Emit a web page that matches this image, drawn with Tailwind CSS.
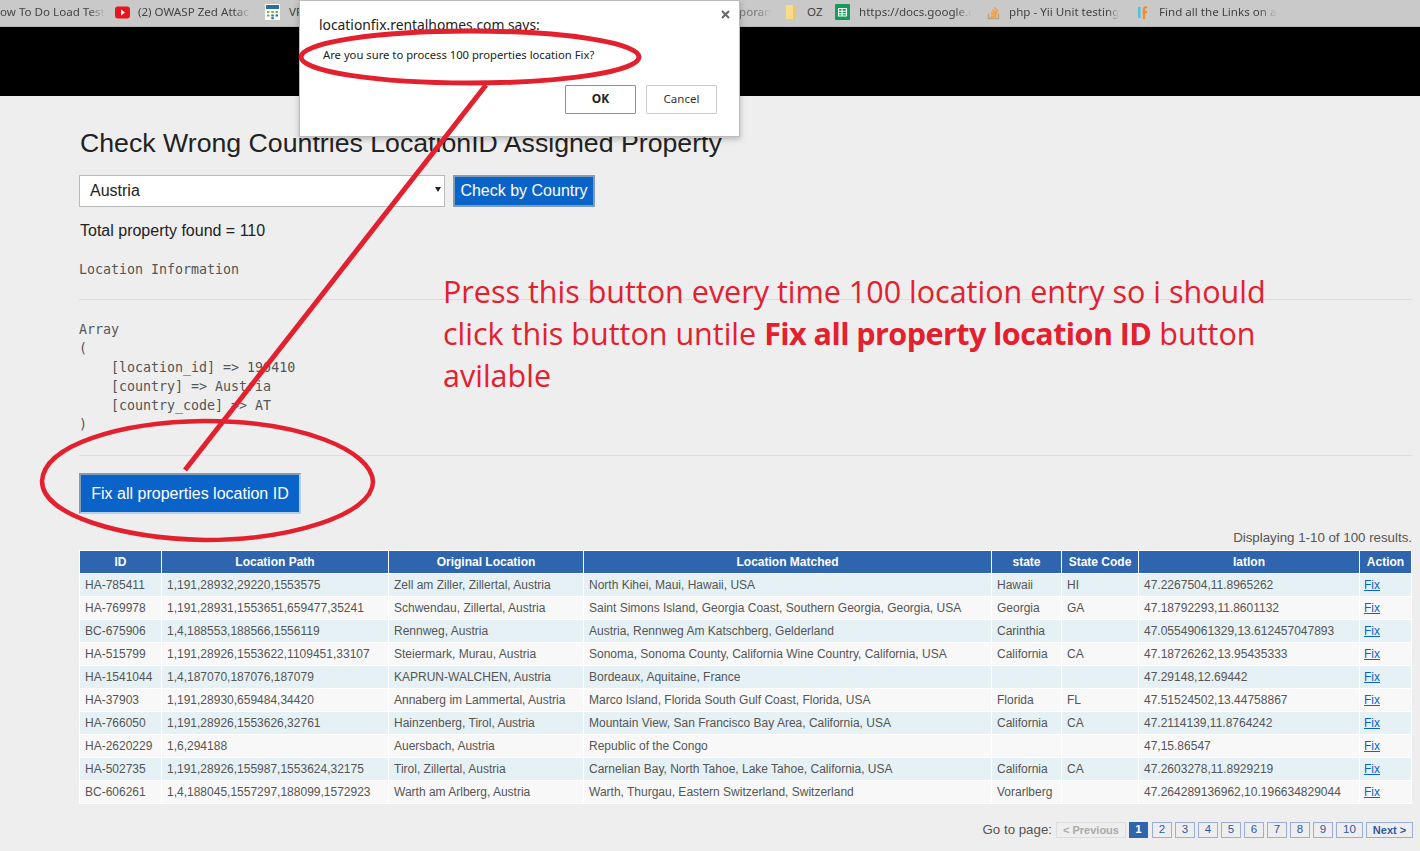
<!DOCTYPE html>
<html lang="en">
<head>
  <meta charset="UTF-8">
  <title>Check Wrong Countries LocationID Assigned Property</title>
  <script src="https://cdn.jsdelivr.net/npm/@tailwindcss/browser@4"></script>
</head>
<body class="relative h-[851px] w-[1420px] overflow-hidden bg-[#eeeeee] font-['Liberation_Sans',sans-serif]">

  <!-- bookmarks bar -->
  <div class="flex h-[27px] items-center overflow-hidden border-b border-[#b5b5b5] bg-[#c9c9c9] pb-[2px] font-['Noto_Sans',sans-serif] text-[11.600px] text-[#444]">
    <span class="w-[105px] shrink-0 whitespace-nowrap [mask-image:linear-gradient(to_right,black_85%,transparent)]">ow To Do Load Test</span>
    <svg class="ml-[10px] shrink-0" width="15" height="13" viewBox="0 0 15 13"><rect width="15" height="12" y="0.5" rx="3" fill="#e8151b"/><path d="M6 3.500l4 3-4 3z" fill="#fff"/></svg>
    <span class="ml-[8px] w-[113px] shrink-0 whitespace-nowrap [mask-image:linear-gradient(to_right,black_85%,transparent)]">(2) OWASP Zed Attac</span>
    <svg class="ml-[14px] shrink-0" width="15" height="16" viewBox="0 0 15 16"><rect width="15" height="16" fill="#fff"/><rect x="1" y="1" width="13" height="4" fill="#2a6f9e"/><g fill="#7cb342"><rect x="2" y="7" width="2.500" height="2"/><rect x="6.300" y="7" width="2.500" height="2"/><rect x="10.500" y="7" width="2.500" height="2"/><rect x="2" y="10.500" width="2.500" height="2"/></g><g fill="#2a6f9e"><rect x="6.300" y="10.500" width="2.500" height="2"/><rect x="10.500" y="10.500" width="2.500" height="2"/><rect x="6.300" y="13.200" width="2.500" height="2"/></g></svg>
    <span class="ml-[9px] w-[20px] shrink-0">VF</span>
    <span class="ml-[430px] w-[32px] shrink-0 whitespace-nowrap text-[#777] [mask-image:linear-gradient(to_right,black_60%,transparent)]">poran</span>
    <svg class="ml-[14px] shrink-0" width="12" height="16" viewBox="0 0 12 16"><path d="M1 1h7l3 2v12H1z" fill="#f7dc8b"/><path d="M8 1l3 2v12H8z" fill="#eec55f"/></svg>
    <span class="ml-[10px] w-[16px] shrink-0">OZ</span>
    <svg class="ml-[12px] shrink-0" width="15" height="16" viewBox="0 0 15 16"><rect width="15" height="16" rx="1" fill="#119c5b"/><path d="M3.500 4.500h8v7.500h-8zM3.500 7.200h8M3.500 9.700h8M7 4.500v7.500" fill="none" stroke="#fff" stroke-width="1.100"/></svg>
    <span class="ml-[9px] w-[113px] shrink-0 whitespace-nowrap [mask-image:linear-gradient(to_right,black_85%,transparent)]">https://docs.google.c</span>
    <svg class="ml-[15px] shrink-0" width="14" height="16" viewBox="0 0 14 16"><path d="M1.500 9.500v5h10v-5" fill="none" stroke="#b7a58c" stroke-width="1.400"/><path d="M3.500 12.800h6M3.600 10.500l6 .6M4.100 8.300l5.800 1.500M5.300 5.900l5.100 3M7.200 3.200l4 4.300" fill="none" stroke="#f0a04a" stroke-width="1.600"/></svg>
    <span class="ml-[8px] w-[110px] shrink-0 whitespace-nowrap [mask-image:linear-gradient(to_right,black_90%,transparent)]">php - Yii Unit testing</span>
    <svg class="ml-[19px] shrink-0" width="11" height="16" viewBox="0 0 11 16"><rect x="0" y="3" width="2.500" height="11" fill="#4ec3e0"/><path d="M6 15V5.500Q6 3 9 3M4.500 8H9" fill="none" stroke="#f58a2b" stroke-width="2.200"/></svg>
    <span class="ml-[10px] w-[118px] shrink-0 whitespace-nowrap [mask-image:linear-gradient(to_right,black_85%,transparent)]">Find all the Links on a</span>
  </div>

  <!-- black site header -->
  <div class="h-[69px] bg-black"></div>

  <!-- content -->
  <main class="pl-[79px] pr-[8px]">
    <h1 class="mt-[30px] h-[35px] pl-px text-[26.700px] leading-[35px] text-[#222]">Check Wrong Countries LocationID Assigned Property</h1>

    <div class="mt-[14px] flex items-center gap-[8px]">
      <div class="relative flex h-[32px] w-[366px] items-center border border-[#bbb] bg-white pl-[10px] text-[16px] text-[#222]">
        Austria
        <span class="absolute right-[3px] top-[11px] h-0 w-0 border-x-[3px] border-t-[5px] border-x-transparent border-t-[#222]"></span>
      </div>
      <button class="h-[32px] w-[142px] border-2 border-[#7f9db9] bg-[#0a63c9] text-[16px] text-white">Check by Country</button>
    </div>

    <p class="mt-[14px] pl-px text-[16px] leading-[20px] text-[#222]">Total property found = 110</p>

    <pre class="mt-[19px] h-[19px] font-['DejaVu_Sans_Mono',monospace] text-[13.300px] leading-[19px] text-[#555]">Location Information</pre>
    <hr class="mt-[20px] w-[1333px] border-[#dddddd]">
    <pre class="mt-[20px] font-['DejaVu_Sans_Mono',monospace] text-[13.300px] leading-[19px] text-[#555]">Array
(
    [location_id] => 190410
    [country] => Austria
    [country_code] => AT
)</pre>
    <hr class="mt-[21px] w-[1333px] border-[#dddddd]">

    <button class="mt-[17px] block h-[41px] w-[222px] border-2 border-[#7f9db9] border-r-[#b9cfe6] border-b-[#b9cfe6] bg-[#0a63c9] text-[16px] text-white">Fix all properties location ID</button>

    <p class="mt-[16px] h-[20px] text-right text-[13.300px] leading-[16px] text-[#555]">Displaying 1-10 of 100 results.</p>

    <table class="w-[1332px] table-fixed border-collapse text-[12px] text-[#555]">
      <colgroup>
        <col class="w-[82px]"><col class="w-[227px]"><col class="w-[195px]"><col class="w-[408px]"><col class="w-[70px]"><col class="w-[77px]"><col class="w-[221px]"><col class="w-[52px]">
      </colgroup>
      <thead>
        <tr class="h-[23px] bg-[#2e65ae] text-white">
          <th class="border border-white font-bold">ID</th>
          <th class="border border-white font-bold">Location Path</th>
          <th class="border border-white font-bold">Original Location</th>
          <th class="border border-white font-bold">Location Matched</th>
          <th class="border border-white font-bold">state</th>
          <th class="border border-white font-bold">State Code</th>
          <th class="border border-white font-bold">latlon</th>
          <th class="border border-white font-bold">Action</th>
        </tr>
      </thead>
      <tbody id="rows"></tbody>
    </table>

    <div class="mr-[-1px] mt-[18px] flex h-[16px] items-center justify-end text-[12px] text-[#555]">
      <span class="mr-[4px] text-[13.300px]">Go to page:</span>
      <a class="flex h-[16px] w-[70px] items-center justify-center border border-[#ddd] text-[11px] font-bold text-[#aaa]">&lt; Previous</a>
      <a class="ml-[3px] flex h-[16px] w-[19px] items-center justify-center bg-[#2e65ae] text-[11.500px] font-bold text-white">1</a>
      <a class="ml-[4px] flex h-[16px] w-[20px] items-center justify-center border border-[#9aaed8] text-[11.500px] text-[#2e5a9e]">2</a>
      <a class="ml-[3px] flex h-[16px] w-[20px] items-center justify-center border border-[#9aaed8] text-[11.500px] text-[#2e5a9e]">3</a>
      <a class="ml-[3px] flex h-[16px] w-[20px] items-center justify-center border border-[#9aaed8] text-[11.500px] text-[#2e5a9e]">4</a>
      <a class="ml-[3px] flex h-[16px] w-[20px] items-center justify-center border border-[#9aaed8] text-[11.500px] text-[#2e5a9e]">5</a>
      <a class="ml-[3px] flex h-[16px] w-[20px] items-center justify-center border border-[#9aaed8] text-[11.500px] text-[#2e5a9e]">6</a>
      <a class="ml-[3px] flex h-[16px] w-[20px] items-center justify-center border border-[#9aaed8] text-[11.500px] text-[#2e5a9e]">7</a>
      <a class="ml-[3px] flex h-[16px] w-[20px] items-center justify-center border border-[#9aaed8] text-[11.500px] text-[#2e5a9e]">8</a>
      <a class="ml-[3px] flex h-[16px] w-[20px] items-center justify-center border border-[#9aaed8] text-[11.500px] text-[#2e5a9e]">9</a>
      <a class="ml-[3px] flex h-[16px] w-[27px] items-center justify-center border border-[#9aaed8] text-[11.500px] text-[#2e5a9e]">10</a>
      <a class="ml-[3px] flex h-[16px] w-[47px] items-center justify-center border border-[#9aaed8] text-[11px] font-bold text-[#2e5a9e]">Next &gt;</a>
    </div>
  </main>

  <!-- alert dialog -->
  <div class="absolute left-[299px] top-0 h-[137px] w-[441px] border border-[#bbb] bg-white font-['Noto_Sans',sans-serif] shadow-[0_2px_6px_rgba(0,0,0,0.25)]">
    <svg class="absolute left-[421px] top-[9px]" width="9" height="9" viewBox="0 0 9 9"><path d="M1 1l7 7M8 1l-7 7" stroke="#666" stroke-width="2" fill="none"/></svg>
    <p class="absolute left-[19px] top-[14px] text-[13.850px] leading-[20px] text-[#222]">locationfix.rentalhomes.com says:</p>
    <p class="absolute left-[23px] top-[45px] text-[11.250px] leading-[17px] text-[#222]">Are you sure to process 100 properties location Fix?</p>
    <div class="absolute left-[265px] top-[84px] flex gap-[10px]">
      <button class="h-[29px] w-[71px] rounded-[1px] border border-[#5a9bd5] bg-white pb-[2px] text-[12px] font-bold text-[#222]">OK</button>
      <button class="h-[29px] w-[71px] rounded-[1px] border border-[#ccc] bg-white pb-[2px] text-[11.500px] text-[#333]">Cancel</button>
    </div>
  </div>

  <!-- red annotation over the screenshot -->
  <svg class="pointer-events-none absolute left-0 top-0" width="1420" height="851" viewBox="0 0 1420 851">
    <ellipse cx="470" cy="57" rx="169" ry="26" fill="none" stroke="#e3202e" stroke-width="5"/>
    <path d="M486 85L185 470" stroke="#e3202e" stroke-width="5" fill="none"/>
    <path d="M42 481C44 445 120 422 205 421C300 421 372 450 373 482C372 515 290 540 205 540C120 538 42 515 42 481Z" fill="none" stroke="#e3202e" stroke-width="4.500"/>
  </svg>
  <p class="absolute left-[443px] top-[270px] w-[860px] font-['Open_Sans',sans-serif] text-[30.500px] leading-[42px] text-[#e3202e]">Press this button every time 100 location entry so i should<br>click this button untile <b class="tracking-[-0.55px]">Fix all property location ID</b> button<br>avilable</p>

  <script>
    // rows of the results table
    const data = [
      ['HA-785411', '1,191,28932,29220,1553575', 'Zell am Ziller, Zillertal, Austria', 'North Kihei, Maui, Hawaii, USA', 'Hawaii', 'HI', '47.2267504,11.8965262'],
      ['HA-769978', '1,191,28931,1553651,659477,35241', 'Schwendau, Zillertal, Austria', 'Saint Simons Island, Georgia Coast, Southern Georgia, Georgia, USA', 'Georgia', 'GA', '47.18792293,11.8601132'],
      ['BC-675906', '1,4,188553,188566,1556119', 'Rennweg, Austria', 'Austria, Rennweg Am Katschberg, Gelderland', 'Carinthia', '', '47.05549061329,13.612457047893'],
      ['HA-515799', '1,191,28926,1553622,1109451,33107', 'Steiermark, Murau, Austria', 'Sonoma, Sonoma County, California Wine Country, California, USA', 'California', 'CA', '47.18726262,13.95435333'],
      ['HA-1541044', '1,4,187070,187076,187079', 'KAPRUN-WALCHEN, Austria', 'Bordeaux, Aquitaine, France', '', '', '47.29148,12.69442'],
      ['HA-37903', '1,191,28930,659484,34420', 'Annaberg im Lammertal, Austria', 'Marco Island, Florida South Gulf Coast, Florida, USA', 'Florida', 'FL', '47.51524502,13.44758867'],
      ['HA-766050', '1,191,28926,1553626,32761', 'Hainzenberg, Tirol, Austria', 'Mountain View, San Francisco Bay Area, California, USA', 'California', 'CA', '47.2114139,11.8764242'],
      ['HA-2620229', '1,6,294188', 'Auersbach, Austria', 'Republic of the Congo', '', '', '47,15.86547'],
      ['HA-502735', '1,191,28926,155987,1553624,32175', 'Tirol, Zillertal, Austria', 'Carnelian Bay, North Tahoe, Lake Tahoe, California, USA', 'California', 'CA', '47.2603278,11.8929219'],
      ['BC-606261', '1,4,188045,1557297,188099,1572923', 'Warth am Arlberg, Austria', 'Warth, Thurgau, Eastern Switzerland, Switzerland', 'Vorarlberg', '', '47.264289136962,10.196634829044']
    ];
    document.getElementById('rows').innerHTML = data.map(row => `
      <tr class="h-[23px] odd:bg-[#e5f1f4] even:bg-[#f8f8f8]">
        ${row.map(c => `<td class="overflow-hidden whitespace-nowrap border border-white px-[5px]">${c}</td>`).join('')}
        <td class="border border-white px-[4px]"><a href="#" class="text-[#0a63c9] underline">Fix</a></td>
      </tr>`).join('');
  </script>
</body>
</html>
